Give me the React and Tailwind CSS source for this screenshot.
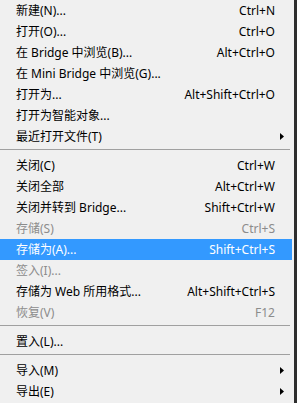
const groups = [
  [
    { label: '新建(N)...', keys: 'Ctrl+N' },
    { label: '打开(O)...', keys: 'Ctrl+O' },
    { label: '在 Bridge 中浏览(B)...', keys: 'Alt+Ctrl+O' },
    { label: '在 Mini Bridge 中浏览(G)...' },
    { label: '打开为...', keys: 'Alt+Shift+Ctrl+O' },
    { label: '打开为智能对象...' },
    { label: '最近打开文件(T)', sub: true },
  ],
  [
    { label: '关闭(C)', keys: 'Ctrl+W' },
    { label: '关闭全部', keys: 'Alt+Ctrl+W' },
    { label: '关闭并转到 Bridge...', keys: 'Shift+Ctrl+W' },
    { label: '存储(S)', keys: 'Ctrl+S', disabled: true },
    { label: '存储为(A)...', keys: 'Shift+Ctrl+S', active: true },
    { label: '签入(I)...', disabled: true },
    { label: '存储为 Web 所用格式...', keys: 'Alt+Shift+Ctrl+S' },
    { label: '恢复(V)', keys: 'F12', disabled: true },
  ],
  [{ label: '置入(L)...' }],
  [
    { label: '导入(M)', sub: true },
    { label: '导出(E)', sub: true },
  ],
]

function Arrow({ active }) {
  return (
    <svg width="4" height="7" viewBox="0 0 4 7">
      <path d="M0 0 L4 3.5 L0 7 Z" fill={active ? '#fff' : '#000'} />
    </svg>
  )
}

function Row({ item }) {
  let color = 'text-black'
  if (item.disabled) color = 'text-[#8c8c8c]'
  if (item.active) color = 'text-white'
  return (
    <div
      className={`flex h-[21px] items-center pl-4 ${color} ${
        item.active ? 'bg-[#3399ff]' : ''
      }`}
    >
      <span className="flex-1 whitespace-nowrap">{item.label}</span>
      {item.keys && <span className="whitespace-nowrap">{item.keys}</span>}
      <span className="flex w-[17px] shrink-0 items-center pl-[5px]">
        {item.sub && <Arrow active={item.active} />}
      </span>
    </div>
  )
}

export default function App() {
  return (
    <div
      className="flex h-[403px] w-[297px] overflow-hidden bg-[#2e2e2e] text-[12px] leading-[21px]"
      style={{ fontFamily: '"Noto Sans", "Noto Sans CJK SC", sans-serif' }}
    >
      <div className="w-[294px] bg-[#f0f0f0] pr-[2px]">
        {groups.map((g, i) => (
          <div key={i}>
            {i > 0 && (
              <div className="h-[8px] pt-[2px] pr-[2px]">
                <div className="h-px bg-[#a0a0a0]" />
              </div>
            )}
            {g.map((item) => (
              <Row key={item.label} item={item} />
            ))}
          </div>
        ))}
      </div>
    </div>
  )
}
